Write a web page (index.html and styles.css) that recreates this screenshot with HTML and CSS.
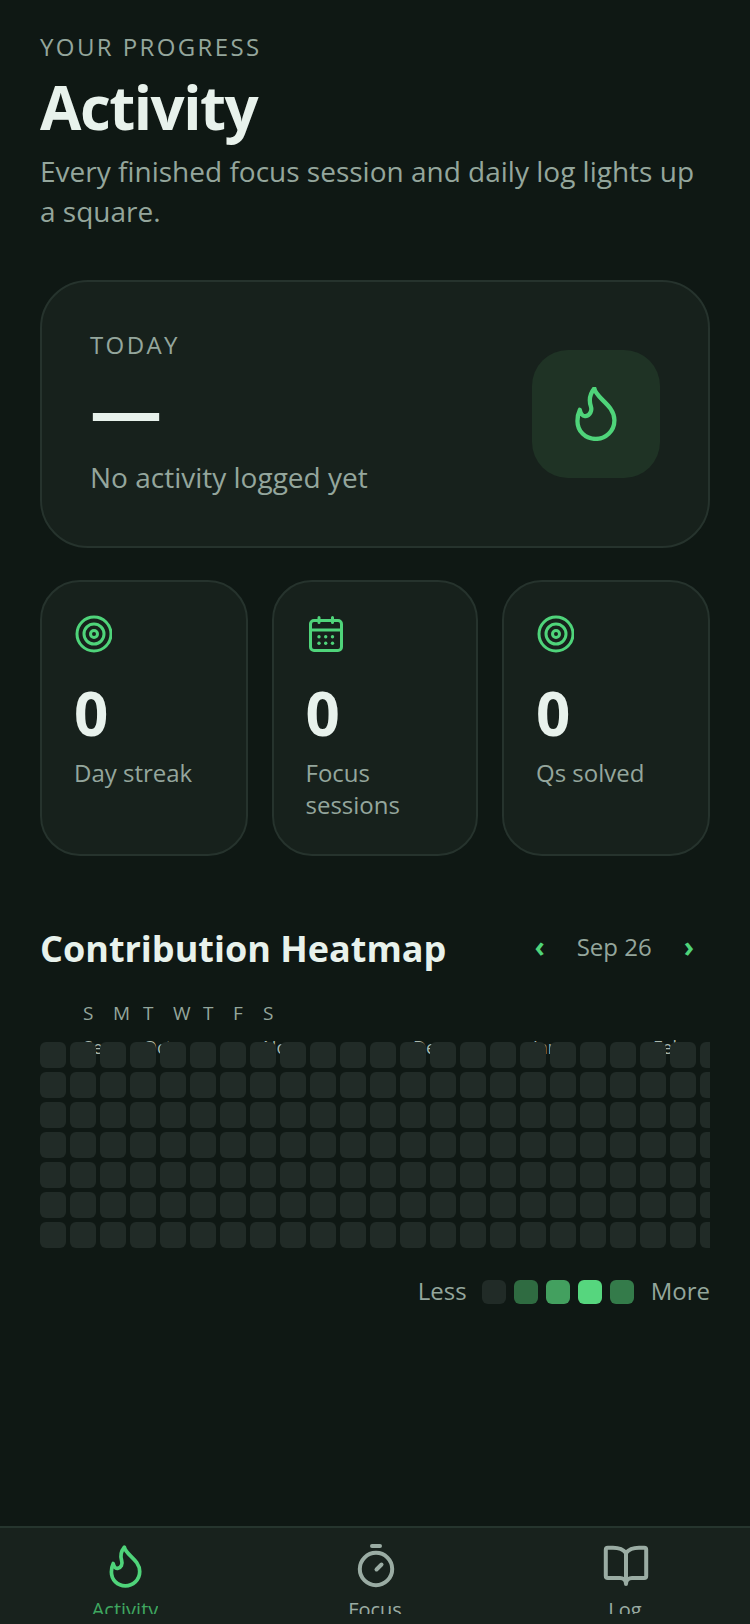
FILE: index.html
```html
<!DOCTYPE html>
<html lang="en">
<head>
  <meta charset="UTF-8">
  <meta name="viewport" content="width=device-width, initial-scale=1.0">
  <title>Activity</title>
  <link rel="stylesheet" href="styles.css">
</head>
<body>
  <main class="content">
    <p class="eyebrow">YOUR PROGRESS</p>
    <h1>Activity</h1>
    <p class="subtitle">Every finished focus session and daily log lights up a square.</p>

    <section class="today-card">
      <div>
        <p class="today-label">TODAY</p>
        <p class="today-value">—</p>
        <p class="today-note">No activity logged yet</p>
      </div>
      <div class="today-icon">
        <svg width="42" height="54" viewBox="0.200 1 30 39" fill="none" stroke="#4fd47a" stroke-width="3.100" stroke-linejoin="round" stroke-linecap="round">
          <path d="M14 2C15 9 28.500 14 28.500 25C28.500 33 22 38.500 15 38.500C7.500 38.500 1.800 33 1.800 25.500C1.800 22 2.500 19.500 3.500 17.500C4 20 5.500 22.500 7.700 22C11 21.500 12.500 18 11.500 15C10.500 12 10 7 14 2Z"/>
        </svg>
      </div>
    </section>

    <section class="stats">
      <div class="stat-card">
        <svg class="stat-icon" width="38" height="38" viewBox="0 0 38 38" fill="none" stroke="#4fd47a" stroke-width="3">
          <circle cx="20" cy="19" r="17"/>
          <circle cx="20" cy="19" r="10"/>
          <circle cx="20" cy="19" r="3.500"/>
        </svg>
        <p class="stat-value">0</p>
        <p class="stat-label">Day streak</p>
      </div>
      <div class="stat-card">
        <svg class="stat-icon" width="38" height="38" viewBox="0 0 38 38" fill="none" stroke="#4fd47a" stroke-width="3" stroke-linecap="round">
          <rect x="4.500" y="5.500" width="31" height="30" rx="3.500"/>
          <path d="M4.500 15h31M13 2.500v5M26.500 2.500v5"/>
          <g fill="#4fd47a" stroke="none">
            <circle cx="13" cy="21.700" r="1.700"/><circle cx="19.700" cy="21.700" r="1.700"/><circle cx="26.500" cy="21.700" r="1.700"/>
            <circle cx="13" cy="28.300" r="1.700"/><circle cx="19.700" cy="28.300" r="1.700"/><circle cx="26.500" cy="28.300" r="1.700"/>
          </g>
        </svg>
        <p class="stat-value">0</p>
        <p class="stat-label">Focus sessions</p>
      </div>
      <div class="stat-card">
        <svg class="stat-icon" width="38" height="38" viewBox="0 0 38 38" fill="none" stroke="#4fd47a" stroke-width="3">
          <circle cx="20" cy="19" r="17"/>
          <circle cx="20" cy="19" r="10"/>
          <circle cx="20" cy="19" r="3.500"/>
        </svg>
        <p class="stat-value">0</p>
        <p class="stat-label">Qs solved</p>
      </div>
    </section>

    <section class="heatmap">
      <div class="heatmap-head">
        <h2>Contribution Heatmap</h2>
        <div class="month-nav">
          <span class="chevron">‹</span>
          <span class="month-name">Sep 26</span>
          <span class="chevron">›</span>
        </div>
      </div>
      <div class="weekdays">
        <span>S</span><span>M</span><span>T</span><span>W</span><span>T</span><span>F</span><span>S</span>
      </div>
      <div class="months">
        <span class="m1">Sep</span><span class="m2">Oct</span><span class="m3">Nov</span><span class="m4">Dec</span><span class="m5">Jan</span><span class="m6">Feb</span>
      </div>
      <div class="grid" id="grid"></div>
      <div class="legend">
        <span>Less</span>
        <i class="swatch level-0"></i>
        <i class="swatch level-1"></i>
        <i class="swatch level-2"></i>
        <i class="swatch level-3"></i>
        <i class="swatch level-4"></i>
        <span>More</span>
      </div>
    </section>
  </main>

  <nav class="tabbar">
    <div class="tab active">
      <svg width="48" height="48" viewBox="0 0 48 48" fill="none" stroke="currentColor" stroke-width="3.500" stroke-linejoin="round" stroke-linecap="round">
        <path transform="translate(8.500 3) scale(1.060)" d="M14 2C15 9 28.500 14 28.500 25C28.500 33 22 38.500 15 38.500C7.500 38.500 1.800 33 1.800 25.500C1.800 22 2.500 19.500 3.500 17.500C4 20 5.500 22.500 7.700 22C11 21.500 12.500 18 11.500 15C10.500 12 10 7 14 2Z"/>
      </svg>
      <span class="tab-label">Activity</span>
    </div>
    <div class="tab">
      <svg width="48" height="48" viewBox="0 0 48 48" fill="none" stroke="currentColor" stroke-width="4" stroke-linecap="round">
        <circle cx="25" cy="27" r="16.200"/>
        <path d="M21 4h8M25.500 27.500l5 -5"/>
      </svg>
      <span class="tab-label">Focus</span>
    </div>
    <div class="tab">
      <svg width="48" height="48" viewBox="0 0 48 48" fill="none" stroke="currentColor" stroke-width="4" stroke-linejoin="round" stroke-linecap="round">
        <path d="M25 11C22 7 18 5.800 12 5.800H6.800Q4.800 5.800 4.800 7.800V34Q4.800 36 6.800 36H19C22 36 25 38 25 42C25 38 28 36 31 36H43.200Q45.200 36 45.200 34V7.800Q45.200 5.800 43.200 5.800H38C32 5.800 28 7 25 11ZM25 11V42"/>
      </svg>
      <span class="tab-label">Log</span>
    </div>
  </nav>

  <script>
    // 23 weeks by 7 days, nothing logged yet
    const grid = document.getElementById('grid');
    for (let i = 0; i < 23 * 7; i++) {
      const cell = document.createElement('div');
      cell.className = 'cell';
      grid.appendChild(cell);
    }
  </script>
</body>
</html>
```

FILE: styles.css
```css
:root {
  --bg: #0f1814;
  --card: #17211c;
  --line: #26332d;
  --text: #e8f2ec;
  --muted: #94a69c;
  --green: #4fd47a;
  --cell: #212b27;
}

* {
  box-sizing: border-box;
}

html, body {
  margin: 0;
  height: 1624px;
  overflow: hidden;
}

body {
  font-family: "Open Sans", sans-serif;
  background-color: var(--bg);
  color: var(--text);
  display: flex;
  flex-direction: column;
}

p, h1, h2 {
  margin: 0;
}

.content {
  flex: 1;
  padding: 29px 40px 0;
  min-height: 0;
}

.eyebrow {
  font-size: 24px;
  line-height: 36px;
  letter-spacing: 2.4px;
  color: var(--muted);
}

h1 {
  font-size: 60px;
  line-height: 84px;
  font-weight: 700;
  letter-spacing: -1.5px;
}

.subtitle {
  font-size: 28px;
  line-height: 40px;
  color: var(--muted);
  margin-top: 2px;
}

.today-card {
  display: flex;
  align-items: center;
  justify-content: space-between;
  height: 268px;
  margin-top: 49px;
  padding: 0 48px;
  background-color: var(--card);
  border: 2px solid var(--line);
  border-radius: 48px;
}

.today-label {
  font-size: 24px;
  line-height: 34px;
  letter-spacing: 2.4px;
  color: var(--muted);
}

.today-value {
  font-size: 72px;
  line-height: 84px;
  font-weight: 700;
  margin-top: 4px;
}

.today-note {
  font-size: 28px;
  line-height: 40px;
  color: var(--muted);
  margin-top: 7px;
  margin-bottom: 3px;
}

.today-icon {
  width: 128px;
  height: 128px;
  border-radius: 36px;
  background-color: #1f3325;
  display: flex;
  align-items: center;
  justify-content: center;
}

.stats {
  display: grid;
  grid-template-columns: 207.5px 206.5px 208px;
  gap: 24px;
  margin-top: 32px;
}

.stat-card {
  height: 276px;
  padding: 33px 32px 0;
  background-color: var(--card);
  border: 2px solid var(--line);
  border-radius: 40px;
}

.stat-icon {
  display: block;
}

.stat-value {
  font-size: 60px;
  line-height: 80px;
  font-weight: 700;
  margin-top: 20px;
}

.stat-label {
  font-size: 24px;
  line-height: 32px;
  color: var(--muted);
  margin-top: 4px;
}

.heatmap {
  margin-top: 68px;
}

.heatmap-head {
  display: flex;
  align-items: center;
  justify-content: space-between;
  height: 44px;
}

h2 {
  font-size: 36px;
  line-height: 44px;
  font-weight: 700;
  padding-top: 6px;
}

.month-nav {
  display: flex;
  align-items: center;
  gap: 32px;
  padding-right: 16px;
  font-size: 24px;
  color: var(--muted);
}

.chevron {
  color: var(--green);
  font-size: 28px;
  line-height: 32px;
  font-weight: 700;
}

.weekdays {
  display: grid;
  grid-template-columns: repeat(7, 26px);
  gap: 4px;
  height: 26px;
  margin-top: 32px;
  padding-left: 43px;
  font-size: 19px;
  line-height: 26px;
  color: var(--muted);
}

/* month names sit just behind the top row of the grid */
.months {
  height: 0;
  font-size: 18px;
  color: #a9b8af;
  position: relative;
}

.months span {
  position: absolute;
  top: 9px;
  line-height: 24px;
}

.m1 { left: 43px; }
.m2 { left: 103px; }
.m3 { left: 223px; }
.m4 { left: 373px; }
.m5 { left: 493px; }
.m6 { left: 613px; }

.grid {
  position: relative;
  display: grid;
  grid-template-rows: repeat(7, 26px);
  grid-auto-flow: column;
  grid-auto-columns: 26px;
  gap: 4px;
  margin-top: 16px;
  overflow: hidden;
}

.cell {
  border-radius: 6px;
  background-color: var(--cell);
}

.legend {
  display: flex;
  align-items: center;
  justify-content: flex-end;
  gap: 8px;
  margin-top: 28px;
  font-size: 24px;
  color: var(--muted);
}

.legend span {
  line-height: 30px;
  padding-bottom: 2px;
}

.legend span:first-child {
  margin-right: 7px;
}

.legend span:last-child {
  margin-left: 9px;
}

.swatch {
  width: 24px;
  height: 24px;
  border-radius: 6px;
}

.level-0 { background-color: var(--cell); }
.level-1 { background-color: #2f6b41; }
.level-2 { background-color: #43a05f; }
.level-3 { background-color: #56d67e; }
.level-4 { background-color: #347b4a; }

.tabbar {
  flex: none;
  display: flex;
  height: 98px;
  background-color: #18221d;
  border-top: 2px solid #26352e;
  color: #9aaca3;
}

.tab {
  flex: 1;
  display: flex;
  flex-direction: column;
  align-items: center;
  padding-top: 14px;
}

.tab svg {
  display: block;
}

.tab.active {
  color: var(--green);
}

.tab-label {
  display: block;
  height: 24px;
  padding-top: 6px;
  overflow: hidden;
  font-size: 20px;
  line-height: 28px;
}

.tab.active .tab-label {
  color: #3fa760;
}
```
